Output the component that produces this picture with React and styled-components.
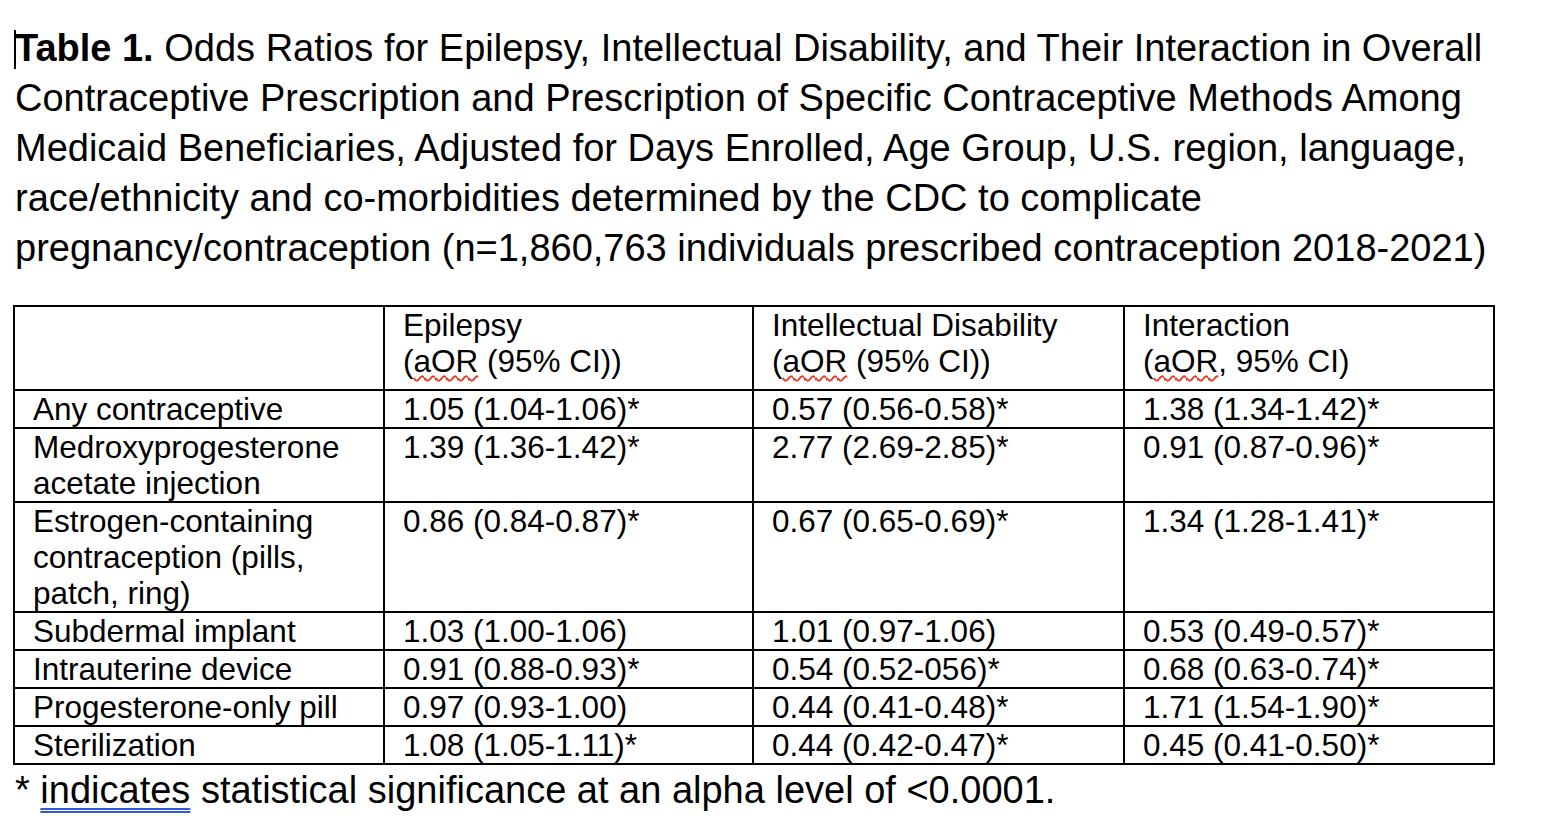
import React from "react";
import styled, { createGlobalStyle } from "styled-components";

const GlobalStyle = createGlobalStyle`
  html, body {
    margin: 0;
    padding: 0;
    background: #ffffff;
  }
  body {
    font-family: "Liberation Sans", Arial, sans-serif;
    color: #000000;
  }
`;

const Page = styled.div`
  width: 1558px;
  height: 840px;
  box-sizing: border-box;
  padding: 23px 0 0 13px;
  background: #ffffff;
  overflow: hidden;
`;

const Title = styled.p`
  position: relative;
  margin: 0 0 32px 2px;
  font-size: 38px;
  line-height: 50px;
  white-space: nowrap;
`;

const Caret = styled.span`
  position: absolute;
  left: -1px;
  top: 7px;
  width: 0;
  height: 39px;
  border-left: 2px solid #000;
`;

const Bold = styled.b`
  font-weight: 700;
`;

const Table = styled.table`
  border-collapse: collapse;
  table-layout: fixed;
  width: 1480px;
  font-size: 31.5px;
  line-height: 36px;
`;

const Col = styled.col`
  width: ${(p) => p.$w}px;
`;

const Cell = styled.td`
  border: 2px solid #000;
  padding: 0 6px ${(p) => (p.$head ? "10px" : "0")} 18px;
  vertical-align: top;
  white-space: nowrap;
`;

const Squiggle = styled.span`
  text-decoration-line: underline;
  text-decoration-style: wavy;
  text-decoration-color: #e63b2a;
  text-decoration-thickness: 1.5px;
  text-underline-offset: 3px;
`;

const Footnote = styled.p`
  margin: 0 0 0 2px;
  font-size: 38px;
  line-height: 50px;
  white-space: nowrap;
`;

const Grammar = styled.span`
  text-decoration-line: underline;
  text-decoration-style: double;
  text-decoration-color: #2f5bd6;
  text-decoration-thickness: 1.5px;
  text-underline-offset: 5px;
`;

const rows = [
  [["Any contraceptive"], "1.05 (1.04-1.06)*", "0.57 (0.56-0.58)*", "1.38 (1.34-1.42)*"],
  [["Medroxyprogesterone", "acetate injection"], "1.39 (1.36-1.42)*", "2.77 (2.69-2.85)*", "0.91 (0.87-0.96)*"],
  [["Estrogen-containing", "contraception (pills,", "patch, ring)"], "0.86 (0.84-0.87)*", "0.67 (0.65-0.69)*", "1.34 (1.28-1.41)*"],
  [["Subdermal implant"], "1.03 (1.00-1.06)", "1.01 (0.97-1.06)", "0.53 (0.49-0.57)*"],
  [["Intrauterine device"], "0.91 (0.88-0.93)*", "0.54 (0.52-056)*", "0.68 (0.63-0.74)*"],
  [["Progesterone-only pill"], "0.97 (0.93-1.00)", "0.44 (0.41-0.48)*", "1.71 (1.54-1.90)*"],
  [["Sterilization"], "1.08 (1.05-1.11)*", "0.44 (0.42-0.47)*", "0.45 (0.41-0.50)*"],
];

export default function App() {
  return (
    <>
      <GlobalStyle />
      <Page>
        <Title>
          <Caret />
          <Bold>Table 1.</Bold> Odds Ratios for Epilepsy, Intellectual Disability, and Their Interaction in Overall
          <br />
          Contraceptive Prescription and Prescription of Specific Contraceptive Methods Among
          <br />
          Medicaid Beneficiaries, Adjusted for Days Enrolled, Age Group, U.S. region, language,
          <br />
          race/ethnicity and co-morbidities determined by the CDC to complicate
          <br />
          pregnancy/contraception (n=1,860,763 individuals prescribed contraception 2018-2021)
        </Title>
        <Table>
          <colgroup>
            <Col $w={370} />
            <Col $w={369} />
            <Col $w={371} />
            <Col $w={370} />
          </colgroup>
          <tbody>
            <tr>
              <Cell $head />
              <Cell $head>
                Epilepsy
                <br />(<Squiggle>aOR</Squiggle> (95% CI))
              </Cell>
              <Cell $head>
                Intellectual Disability
                <br />(<Squiggle>aOR</Squiggle> (95% CI))
              </Cell>
              <Cell $head>
                Interaction
                <br />(<Squiggle>aOR</Squiggle>, 95% CI)
              </Cell>
            </tr>
            {rows.map(([label, a, b, c]) => (
              <tr key={label.join(" ")}>
                <Cell>
                  {label.map((l, i) => (
                    <React.Fragment key={l}>
                      {i > 0 && <br />}
                      {l}
                    </React.Fragment>
                  ))}
                </Cell>
                <Cell>{a}</Cell>
                <Cell>{b}</Cell>
                <Cell>{c}</Cell>
              </tr>
            ))}
          </tbody>
        </Table>
        <Footnote>
          * <Grammar>indicates</Grammar> statistical significance at an alpha level of &lt;0.0001.
        </Footnote>
      </Page>
    </>
  );
}
